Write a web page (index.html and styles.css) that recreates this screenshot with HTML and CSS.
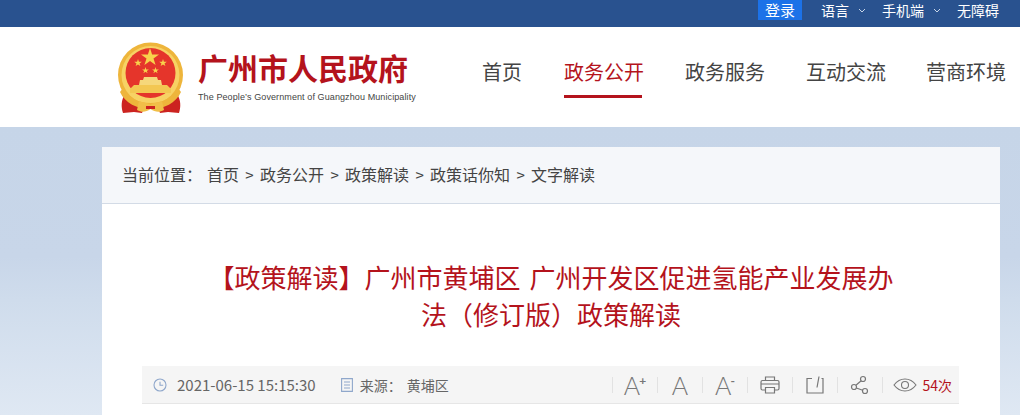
FILE: index.html
```html
<!DOCTYPE html>
<html lang="zh-CN">
<head>
<meta charset="utf-8">
<title>广州市人民政府</title>
<link rel="stylesheet" href="styles.css">
</head>
<body>
<div class="topbar">
  <a class="login">登录</a>
  <span class="top-link lang">语言<svg class="chev" viewBox="0 0 8 5"><path d="M1 1l3 3 3-3"/></svg></span>
  <span class="top-link mobile">手机端<svg class="chev" viewBox="0 0 8 5"><path d="M1 1l3 3 3-3"/></svg></span>
  <span class="top-link access">无障碍</span>
</div>
<header class="header">
  <div class="brand">
    <svg class="emblem" viewBox="0 0 68 72">
      <path d="M7 52C3 58 3 65 5 71l11-1 8 1 3-8-8-11zM59 52c4 6 4 13 2 19l-11-1-8 1-3-8 8-11z" fill="#cc2320"/>
      <circle cx="32.500" cy="33" r="32.500" fill="#eeb53b"/>
      <circle cx="32.500" cy="33" r="29" fill="#f7d264"/>
      <circle cx="32.500" cy="31" r="25" fill="#e5352b"/>
      <path d="M32 6l2.100 6.500H41l-5.500 4 2.100 6.500-5.600-4-5.600 4 2.100-6.500-5.500-4h6.900z" fill="#f8d24c"/>
      <path d="M20 17l.9 2.700h2.900l-2.300 1.700.9 2.700-2.400-1.700-2.400 1.700.9-2.700-2.300-1.700h2.900zM45 17l.9 2.700h2.900l-2.300 1.700.9 2.700-2.400-1.700-2.400 1.700.9-2.700-2.300-1.700h2.900zM27.500 25l.8 2.400h2.600l-2.100 1.500.8 2.400-2.100-1.500-2.100 1.500.8-2.400-2.100-1.500h2.600zM37.500 25l.8 2.400h2.600l-2.100 1.500.8 2.400-2.100-1.500-2.100 1.500.8-2.400-2.100-1.500h2.600z" fill="#f8d24c"/>
      <path d="M26 35h13l1 3h3l1 5H21l1-5h3z" fill="#f6d77a"/>
      <path d="M16 43h33l4 4v4H12v-4z" fill="#f3c752"/>
      <path d="M5 46c5 9 15 15 27.500 15S55 55 60 46l3 4c-5 11-17 17-30.500 17S7 61 2 50z" fill="#eeb53b"/>
      <path d="M21 59c4 2 8 1 11.500 4 3.500-3 7.500-2 11.500-4l2 9c-5 3-9 2-13.500-1-4.500 3-8.500 4-13.500 1z" fill="#f1bf48"/>
      <path d="M28 64h9v3h-9z" fill="#cc2320"/>
    </svg>
    <div class="brand-text">
      <div class="brand-cn">广州市人民政府</div>
      <div class="brand-en">The People’s Government of Guangzhou Municipality</div>
    </div>
  </div>
  <nav class="nav">
    <a class="nav-item">首页</a>
    <a class="nav-item active">政务公开</a>
    <a class="nav-item">政务服务</a>
    <a class="nav-item">互动交流</a>
    <a class="nav-item">营商环境</a>
  </nav>
</header>
<main class="page">
  <div class="card">
    <div class="crumbs">
      <span class="crumb-label">当前位置：</span>
      <span>首页</span><i>&gt;</i><span>政务公开</span><i>&gt;</i><span>政策解读</span><i>&gt;</i><span>政策话你知</span><i>&gt;</i><span>文字解读</span>
    </div>
    <h1 class="title">【政策解读】广州市黄埔区 广州开发区促进氢能产业发展办法（修订版）政策解读</h1>
    <div class="meta">
      <div class="meta-left">
        <svg class="clock" viewBox="0 0 14 14"><circle cx="7" cy="7" r="6"/><path d="M7 3.800V7.300h3.200"/></svg>
        <span class="date">2021-06-15 15:15:30</span>
        <svg class="doc" viewBox="0 0 12 14"><path d="M.6.600h10.800v12.800H.6zM3 4h6M3 7h6M3 10h6"/></svg>
        <span class="source">来源：</span><span class="source-name">黄埔区</span>
      </div>
      <div class="tools">
        <span class="tool"><span class="fa">A<sup>+</sup></span></span>
        <span class="tool"><span class="fa">A</span></span>
        <span class="tool"><span class="fa">A<sup>-</sup></span></span>
        <span class="tool"><svg class="ti" viewBox="0 0 20 20"><path d="M5.500 5.500V2h9v3.500M5.500 15H2.500a1.500 1.500 0 0 1-1.500-1.500v-6.500a1.500 1.500 0 0 1 1.500-1.500h15a1.500 1.500 0 0 1 1.500 1.500v6.500a1.500 1.500 0 0 1-1.500 1.500h-3M5.500 12.500h9V18h-9zM1 9h18"/></svg></span>
        <span class="tool"><svg class="ti" viewBox="0 0 20 20"><path d="M7 3.500H2V18h16V3.500h-1.500M14 1.500L12 12.500"/></svg></span>
        <span class="tool"><svg class="ti" viewBox="0 0 20 20"><circle cx="13" cy="4" r="2.500"/><circle cx="4" cy="12" r="2.500"/><circle cx="15" cy="16" r="2.500"/><path d="M11.200 5.800L5.900 10.300M6.300 13l6.400 2.300"/></svg></span>
        <span class="sep"></span>
        <svg class="eye" viewBox="0 0 24 14"><path d="M1 7c3-4 7-6 11-6s8 2 11 6c-3 4-7 6-11 6S4 11 1 7z"/><circle cx="12" cy="7" r="3.500"/></svg>
        <span class="views">54次</span>
      </div>
    </div>
  </div>
</main>
</body>
</html>
```
FILE: styles.css
```css
* { box-sizing: border-box; }
html, body { margin: 0; height: 415px; overflow: hidden; }
body {
  font-family: "Noto Sans CJK SC", "Noto Sans", sans-serif;
  background: #fff;
  width: 1020px;
}
.topbar {
  height: 27px;
  background: #29528f;
  display: flex;
  align-items: flex-start;
  padding-left: 758px;
  color: #fff;
  font-size: 14px;
  line-height: 20px;
}
.login {
  width: 44px;
  height: 20px;
  background: #1c72e8;
  text-align: center;
  font-size: 15px;
}
.top-link { display: flex; align-items: center; height: 20px; white-space: nowrap; }
.lang { margin-left: 19px; }
.mobile { margin-left: 16px; }
.access { margin-left: 16px; }
.chev { width: 8px; height: 5px; margin-left: 9px; fill: none; stroke: #c6d5e8; stroke-width: 1; }
.header {
  height: 100px;
  display: flex;
  padding-left: 118px;
  background: #fff;
}
.brand { display: flex; width: 365px; padding-top: 15px; }
.emblem { width: 68px; height: 72px; flex: none; }
.brand-text { margin-left: 12px; white-space: nowrap; }
.brand-cn {
  font-size: 30px;
  line-height: 40px;
  margin-top: 5px;
  font-weight: 700;
  color: #b4131c;
}
.brand-en {
  font-size: 9px;
  line-height: 12px;
  margin-top: 4px;
  letter-spacing: .1px;
  color: #444;
  font-family: "Liberation Sans", sans-serif;
}
.nav { display: flex; gap: 41px; white-space: nowrap; }
.nav-item {
  font-size: 20px;
  line-height: 30px;
  padding-top: 30px;
  color: #444;
}
.nav-item:first-child { margin-left: -1px; margin-right: 1px; }
.nav-item:last-child { margin-left: -1px; }
.nav-item.active { color: #b4131c; }
.nav-item.active::after {
  content: "";
  display: block;
  width: 78px;
  height: 3px;
  margin-top: 8px;
  background: #b4131c;
}
.page {
  height: 288px;
  background: linear-gradient(180deg, #c6d5e8 0, #c8d6e9 45%, #cfdcec 60%, #dfe8f3 100%);
  padding: 20px 20px 0 102px;
}
.card { background: #fff; height: 268px; }
.crumbs {
  height: 57px;
  background: #f5f7fa;
  border-bottom: 1px solid #d3dbe6;
  padding: 0 0 2px 20px;
  display: flex;
  align-items: center;
  font-size: 16px;
  color: #444;
  white-space: nowrap;
}
.crumb-label { margin-right: 5px; }
.crumbs i { font-style: normal; width: 21px; text-align: center; font-size: 15px; }
.title {
  margin: 0;
  padding: 54px 103px 0;
  font-size: 26px;
  line-height: 37px;
  height: 162px;
  font-weight: 400;
  word-spacing: 3px;
  color: #b4131c;
  text-align: center;
}
.meta {
  margin: 0 41px 0 40px;
  height: 38px;
  background: #f5f5f5;
  border-bottom: 1px solid #e6e6e6;
  display: flex;
  justify-content: space-between;
  align-items: center;
  padding: 0 7px 0 11px;
  font-size: 14px;
  color: #666;
}
.meta-left, .tools { display: flex; align-items: center; }
.clock, .doc { fill: none; stroke: #8fa7cb; stroke-width: 1.1; flex: none; }
.clock { width: 14px; height: 14px; }
.doc { width: 12px; height: 14px; margin-left: 25px; }
.date { margin-left: 10px; font-size: 15px; }
.source { margin-left: 7px; }
.source-name { margin-left: 5px; }
.tool {
  width: 45px;
  height: 18px;
  display: flex;
  justify-content: center;
  align-items: center;
  background: linear-gradient(#e2e2e2, #e2e2e2) left center / 1px 16px no-repeat;
}
.sep { width: 1px; height: 16px; background: #e2e2e2; }
.fa {
  font-family: "Lato", sans-serif;
  font-weight: 300;
  font-size: 25px;
  line-height: 24px;
  color: #777;
}
.fa sup { font-size: 12px; line-height: 0; vertical-align: 10px; font-weight: 700; margin-left: -1px; }
.ti { width: 20px; height: 20px; fill: none; stroke: #777; stroke-width: 1.2; }
.eye { width: 24px; height: 14px; margin-left: 10px; fill: none; stroke: #777; stroke-width: 1.1; }
.views { margin-left: 5px; color: #b4131c; }
```
